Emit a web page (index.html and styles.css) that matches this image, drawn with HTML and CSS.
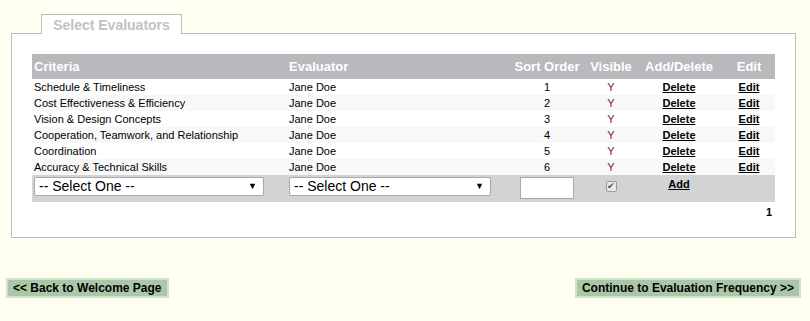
FILE: index.html
```html
<!DOCTYPE html>
<html lang="en">
<head>
    <meta charset="UTF-8">
    <title>Select Evaluators</title>
    <link rel="stylesheet" href="styles.css">
</head>
<body>
    <div class="wrap">
        <div class="tab">Select Evaluators</div>
        <div class="panel">
            <table class="grid">
                <tr class="head">
                    <th class="c-crit">Criteria</th>
                    <th class="c-eval">Evaluator</th>
                    <th class="c-sort">Sort Order</th>
                    <th class="c-vis">Visible</th>
                    <th class="c-del">Add/Delete</th>
                    <th class="c-edit">Edit</th>
                </tr>
                <tr><td>Schedule &amp; Timeliness</td><td>Jane Doe</td><td class="mid">1</td><td class="mid yes">Y</td><td class="mid"><a href="#">Delete</a></td><td class="mid"><a href="#">Edit</a></td></tr>
                <tr class="alt"><td>Cost Effectiveness &amp; Efficiency</td><td>Jane Doe</td><td class="mid">2</td><td class="mid yes">Y</td><td class="mid"><a href="#">Delete</a></td><td class="mid"><a href="#">Edit</a></td></tr>
                <tr><td>Vision &amp; Design Concepts</td><td>Jane Doe</td><td class="mid">3</td><td class="mid yes">Y</td><td class="mid"><a href="#">Delete</a></td><td class="mid"><a href="#">Edit</a></td></tr>
                <tr class="alt"><td>Cooperation, Teamwork, and Relationship</td><td>Jane Doe</td><td class="mid">4</td><td class="mid yes">Y</td><td class="mid"><a href="#">Delete</a></td><td class="mid"><a href="#">Edit</a></td></tr>
                <tr><td>Coordination</td><td>Jane Doe</td><td class="mid">5</td><td class="mid yes">Y</td><td class="mid"><a href="#">Delete</a></td><td class="mid"><a href="#">Edit</a></td></tr>
                <tr class="alt"><td>Accuracy &amp; Technical Skills</td><td>Jane Doe</td><td class="mid">6</td><td class="mid yes">Y</td><td class="mid"><a href="#">Delete</a></td><td class="mid"><a href="#">Edit</a></td></tr>
                <tr class="add-row">
                    <td><div class="pick pick-crit">-- Select One --<span class="arrow">&#9660;</span></div></td>
                    <td><div class="pick pick-eval">-- Select One --<span class="arrow">&#9660;</span></div></td>
                    <td class="mid"><input type="text" class="sort-box"></td>
                    <td class="mid"><span class="check">&#10004;</span></td>
                    <td class="mid top"><a href="#">Add</a></td>
                    <td></td>
                </tr>
            </table>
            <div class="pager">1</div>
        </div>
    </div>

    <div class="nav">
        <a href="#" class="nav-btn">&lt;&lt; Back to Welcome Page</a>
        <a href="#" class="nav-btn">Continue to Evaluation Frequency &gt;&gt;</a>
    </div>
</body>
</html>
```

FILE: styles.css
```css
body {
    margin: 0;
    background-color: #fffff2;
    font-family: 'Liberation Sans', Arial, sans-serif;
    font-size: 11px;
    color: #000;
}
.wrap {
    margin: 14px 14px 0 11px;
}
.tab {
    position: relative;
    box-sizing: border-box;
    width: 141px;
    height: 20px;
    margin-left: 30px;
    margin-bottom: -1px;
    border: 1px solid #bbb;
    border-bottom: none;
    background: #fff;
    color: #c3c1c6;
    font-size: 14px;
    font-weight: bold;
    text-align: center;
    line-height: 20px;
}
.panel {
    background: #fff;
    border: 1px solid #bbb;
    padding: 20px 20px 5px 20px;
    height: 178px;
}
.grid {
    width: 743px;
    border-collapse: collapse;
}
.grid th {
    background: #bab7bd;
    color: #fff;
    font-size: 13px;
    font-weight: bold;
    height: 25px;
    padding: 0 2px;
    text-align: center;
}
.grid td {
    height: 16px;
    padding: 0 2px;
    white-space: nowrap;
}
.grid th.c-crit, .grid th.c-eval { text-align: left; }
.c-crit { width: 251px; }
.c-eval { width: 216px; }
.c-sort { width: 76px; }
.c-vis { width: 44px; }
.c-del { width: 84px; }
.c-edit { width: 48px; }
.grid tr.alt td { background: #f8f8f8; }
.mid { text-align: center; }
.yes { color: #85103f; }
.grid a {
    color: #000;
    font-weight: bold;
}
.add-row td {
    background: #d3d3d3;
    height: 24px;
    line-height: 12px;
    vertical-align: top;
    padding-top: 2px;
}
.add-row td.top {
    padding-top: 3px;
}
.pick {
    box-sizing: border-box;
    position: relative;
    height: 19px;
    line-height: 17px;
    border: 1px solid #a9a9a9;
    border-radius: 2px;
    background: #fff;
    font-size: 14px;
    padding-left: 4px;
}
.pick-crit { width: 230px; }
.pick-eval { width: 202px; }
.arrow {
    position: absolute;
    right: 6px;
    top: 0;
    font-size: 9px;
}
.sort-box {
    display: block;
    box-sizing: border-box;
    width: 54px;
    height: 22px;
    margin: 0 auto;
    border: 1px solid #aaa;
    background: #fff;
}
.check {
    display: inline-block;
    box-sizing: border-box;
    width: 11px;
    height: 11px;
    margin-top: 4px;
    border: 1px solid #9a9a9a;
    border-radius: 2px;
    background: #e8e8e8;
    color: #555;
    font-size: 9px;
    line-height: 9px;
}
.pager {
    text-align: right;
    font-weight: bold;
    padding: 4px 3px 0 0;
}
.nav {
    display: flex;
    justify-content: space-between;
    margin: 40px 9px 0 6px;
}
.nav-btn {
    display: inline-block;
    background: #aac8a6;
    border: 2px solid #d2e2cc;
    color: #000;
    font-size: 12px;
    font-weight: bold;
    text-decoration: none;
    padding: 0 5px;
    line-height: 16px;
}
```
